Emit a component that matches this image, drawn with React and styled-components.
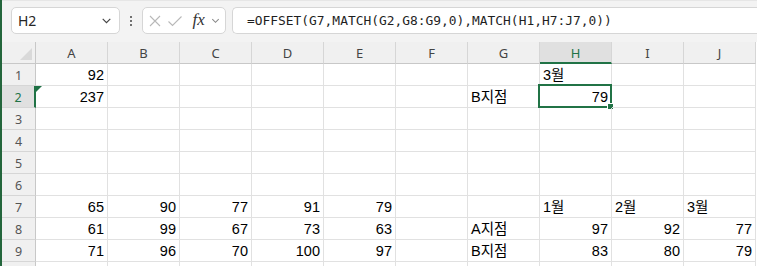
import React from "react";
import styled, { createGlobalStyle } from "styled-components";

const Global = createGlobalStyle`
  html, body { margin: 0; padding: 0; background: #ffffff; overflow: hidden; }
  body { font-family: "Liberation Sans", Arial, sans-serif; }
`;

const Frame = styled.div`
  display: flex;
  width: 757px;
  height: 266px;
  overflow: hidden;
  background: #ffffff;
`;

const Strip = styled.div`
  flex: 0 0 2px;
  background: #24663c;
`;

const Main = styled.div`
  flex: 1;
  display: flex;
  flex-direction: column;
  min-width: 0;
`;

const Toolbar = styled.div`
  height: 42px;
  flex: 0 0 42px;
  box-sizing: border-box;
  background: #f3f3f3;
  border-top: 1px solid #e6e6e6;
  display: flex;
  align-items: flex-start;
  padding: 6px 0 0 9px;
`;

const Box = styled.div`
  height: 27px;
  box-sizing: border-box;
  background: #ffffff;
  border: 1px solid #d6d6d6;
  border-radius: 5px;
  display: flex;
  align-items: center;
`;

const NameBox = styled(Box)`
  width: 109px;
  padding: 0 6px 0 6px;
  justify-content: space-between;
  font-family: "Noto Sans", "Open Sans", sans-serif;
  font-size: 14px;
  color: #262626;
`;

const Dots = styled.div`
  width: 22px;
  display: flex;
  flex-direction: column;
  align-items: center;
  gap: 2px;
  padding-top: 9px;
  span {
    width: 2px;
    height: 2px;
    background: #444;
    border-radius: 1px;
  }
`;

const FxBox = styled(Box)`
  width: 84px;
  padding: 0 4px 0 5px;
  justify-content: space-between;
`;

const Fx = styled.span`
  font-family: "Liberation Serif", "DejaVu Serif", serif;
  font-style: italic;
  font-size: 17px;
  color: #333333;
  margin-left: 4px;
  margin-top: -1px;
`;

const FormulaBox = styled(Box)`
  flex: 1;
  margin-left: 6px;
  border-right: none;
  border-radius: 5px 0 0 5px;
  padding-left: 14px;
  font-family: "DejaVu Sans Mono", "Liberation Mono", monospace;
  font-size: 12.9px;
  color: #1f1f1f;
  white-space: nowrap;
`;

const Grid = styled.div`
  display: grid;
  grid-template-columns: 34px repeat(10, 72px);
  grid-auto-rows: 22px;
`;

const Corner = styled.div`
  box-sizing: border-box;
  background: #f0f0f0;
  border-right: 1px solid #c8c8c8;
  border-bottom: 1px solid #c8c8c8;
  position: relative;
  &::after {
    content: "";
    position: absolute;
    right: 3px;
    bottom: 3px;
    width: 0;
    height: 0;
    border-left: 12px solid transparent;
    border-bottom: 12px solid #d9d9d9;
  }
`;

const ColHead = styled.div`
  box-sizing: border-box;
  background: ${(p) => (p.$active ? "#e0e0e0" : "#f0f0f0")};
  border-right: 1px solid #d6d6d6;
  border-bottom: ${(p) => (p.$active ? "2px solid #217346" : "1px solid #c8c8c8")};
  display: flex;
  align-items: center;
  justify-content: center;
  font-family: "Noto Sans", "Open Sans", sans-serif;
  font-size: 13px;
  color: ${(p) => (p.$active ? "#217346" : "#444444")};
  padding-top: ${(p) => (p.$active ? "1px" : "0")};
`;

const RowHead = styled.div`
  box-sizing: border-box;
  background: ${(p) => (p.$active ? "#e0e0e0" : "#f0f0f0")};
  border-right: ${(p) => (p.$active ? "2px solid #217346" : "1px solid #c8c8c8")};
  border-bottom: 1px solid #d6d6d6;
  display: flex;
  align-items: center;
  justify-content: center;
  font-family: "Noto Sans", "Open Sans", sans-serif;
  font-size: 12.5px;
  color: ${(p) => (p.$active ? "#217346" : "#555555")};
  padding-top: 2px;
`;

const Cell = styled.div`
  box-sizing: border-box;
  position: relative;
  border-right: 1px solid #e1e1e1;
  border-bottom: 1px solid #e1e1e1;
  display: flex;
  align-items: flex-end;
  justify-content: ${(p) => (p.$num ? "flex-end" : "flex-start")};
  padding: 0 3px 2px 3px;
  font-family: "Liberation Sans", "Noto Sans CJK KR", sans-serif;
  font-size: 14.5px;
  line-height: 16px;
  color: #000;
  white-space: nowrap;
`;

const Selection = styled.div`
  position: absolute;
  left: -2px;
  top: -2px;
  right: -1px;
  bottom: -1px;
  border: 2px solid #217346;
  pointer-events: none;
  &::after {
    content: "";
    position: absolute;
    right: -4px;
    bottom: -4px;
    width: 5px;
    height: 5px;
    background: #217346;
    border: 1px solid #fff;
  }
`;

const ErrorMark = styled.div`
  position: absolute;
  left: 0;
  top: 0;
  width: 0;
  height: 0;
  border-top: 6px solid #1e7145;
  border-right: 6px solid transparent;
`;

const Chevron = ({ size = 12, color = "#444" }) => (
  <svg width={size} height={size} viewBox="0 0 12 12">
    <path d="M2.5 4.5 L6 8 L9.5 4.5" fill="none" stroke={color} strokeWidth="1.1" />
  </svg>
);

const XIcon = () => (
  <svg width="14" height="14" viewBox="0 0 14 14">
    <path d="M2 2 L12 12 M12 2 L2 12" stroke="#b8b8b8" strokeWidth="1.1" fill="none" />
  </svg>
);

const CheckIcon = () => (
  <svg width="16" height="14" viewBox="0 0 16 14">
    <path d="M1.5 7.5 L5.5 11.5 L14.5 2.5" stroke="#b8b8b8" strokeWidth="1.1" fill="none" />
  </svg>
);

const cols = ["A", "B", "C", "D", "E", "F", "G", "H", "I", "J"];

const data = {
  1: { A: "92", H: "3월" },
  2: { A: "237", G: "B지점", H: "79" },
  7: { A: "65", B: "90", C: "77", D: "91", E: "79", H: "1월", I: "2월", J: "3월" },
  8: { A: "61", B: "99", C: "67", D: "73", E: "63", G: "A지점", H: "97", I: "92", J: "77" },
  9: { A: "71", B: "96", C: "70", D: "100", E: "97", G: "B지점", H: "83", I: "80", J: "79" },
};

const isNum = (v) => /^\d+$/.test(v || "");

export default function App() {
  const rows = [1, 2, 3, 4, 5, 6, 7, 8, 9, 10];
  return (
    <>
      <Global />
      <Frame>
        <Strip />
        <Main>
          <Toolbar>
            <NameBox>
              <span>H2</span>
              <Chevron size={13} />
            </NameBox>
            <Dots>
              <span />
              <span />
              <span />
            </Dots>
            <FxBox>
              <XIcon />
              <CheckIcon />
              <Fx>fx</Fx>
              <Chevron size={11} color="#888" />
            </FxBox>
            <FormulaBox>=OFFSET(G7,MATCH(G2,G8:G9,0),MATCH(H1,H7:J7,0))</FormulaBox>
          </Toolbar>
          <Grid>
            <Corner />
            {cols.map((c) => (
              <ColHead key={c} $active={c === "H"}>
                {c}
              </ColHead>
            ))}
            {rows.map((r) => (
              <React.Fragment key={r}>
                <RowHead $active={r === 2}>{r < 10 ? r : ""}</RowHead>
                {cols.map((c) => {
                  const v = data[r] && data[r][c];
                  return (
                    <Cell key={c} $num={isNum(v)}>
                      {r === 2 && c === "A" && <ErrorMark />}
                      {v}
                      {r === 2 && c === "H" && <Selection />}
                    </Cell>
                  );
                })}
              </React.Fragment>
            ))}
          </Grid>
        </Main>
      </Frame>
    </>
  );
}
